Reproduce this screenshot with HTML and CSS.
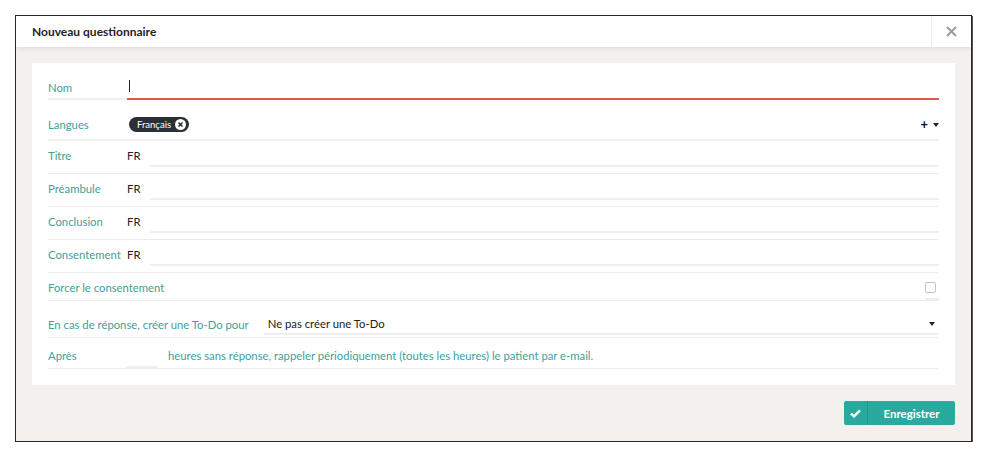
FILE: index.html
```html
<!DOCTYPE html>
<html lang="fr">
<head>
    <meta charset="UTF-8">
    <meta name="viewport" content="width=device-width, initial-scale=1.0">
    <title>Nouveau questionnaire</title>
    <link rel="stylesheet" href="styles.css">
</head>
<body>
    <div class="modal">
        <div class="modal-header">
            <h4 class="modal-title">Nouveau questionnaire</h4>
            <button class="modal-close" type="button" aria-label="Fermer">
                <svg width="11" height="11" viewBox="0 0 11 11"><path d="M1 1L10 10M10 1L1 10" stroke="#9c9c9c" stroke-width="2"/></svg>
            </button>
        </div>

        <div class="modal-body">
            <div class="form-panel">
                <div class="form-row row-nom">
                    <label class="form-label">Nom</label>
                    <div class="form-input input-focus"><span class="text-cursor"></span></div>
                </div>

                <div class="form-row row-langues">
                    <label class="form-label">Langues</label>
                    <div class="lang-tags">
                        <span class="lang-tag">Français
                            <svg class="tag-remove" width="11" height="11" viewBox="0 0 11 11"><circle cx="5.5" cy="5.5" r="5.5" fill="#fff"/><path d="M3.5 3.5L7.5 7.5M7.5 3.5L3.5 7.5" stroke="#2b3036" stroke-width="1.6"/></svg>
                        </span>
                    </div>
                    <div class="lang-add"><span class="plus">+</span><span class="caret"></span></div>
                </div>

                <div class="form-row row-i18n">
                    <label class="form-label">Titre</label>
                    <span class="lang-code">FR</span>
                    <div class="form-input"></div>
                </div>
                <div class="form-row row-i18n">
                    <label class="form-label">Préambule</label>
                    <span class="lang-code">FR</span>
                    <div class="form-input"></div>
                </div>
                <div class="form-row row-i18n">
                    <label class="form-label">Conclusion</label>
                    <span class="lang-code">FR</span>
                    <div class="form-input"></div>
                </div>
                <div class="form-row row-i18n">
                    <label class="form-label">Consentement</label>
                    <span class="lang-code">FR</span>
                    <div class="form-input"></div>
                </div>

                <div class="form-row row-check">
                    <label class="form-label label-auto">Forcer le consentement</label>
                    <div class="check-wrap"><span class="checkbox"></span></div>
                </div>

                <div class="form-row row-select">
                    <label class="form-label label-auto">En cas de réponse, créer une To-Do pour</label>
                    <div class="form-select">
                        <span>Ne pas créer une To-Do</span>
                        <span class="caret"></span>
                    </div>
                </div>

                <div class="form-row row-rappel">
                    <label class="form-label">Après</label>
                    <div class="form-input input-small"></div>
                    <span class="inline-text">heures sans réponse, rappeler périodiquement (toutes les heures) le patient par e-mail.</span>
                </div>
            </div>
        </div>

        <div class="modal-footer">
            <button class="btn-save" type="button">
                <span class="btn-icon">
                    <svg width="11" height="9" viewBox="0 0 11 9"><path d="M1 4.6L4 7.4L10 1.4" fill="none" stroke="#fff" stroke-width="2.4"/></svg>
                </span>
                <span class="btn-text">Enregistrer</span>
            </button>
        </div>
    </div>
</body>
</html>
```

FILE: styles.css
```css
body { margin: 0; background: #fff; font-family: Lato, "Liberation Sans", sans-serif; font-size: 11.3px; color: #222; }

.modal { box-sizing: border-box; width: 957px; margin: 15px 0 0 15px; border: 1px solid #2a2a2a; box-shadow: 1px 1px 0 #555; background: #f3f0ed; }

.modal-header { display: flex; align-items: stretch; height: 31px; background: #fff; box-shadow: 0 2px 4px rgba(0,0,0,0.07); position: relative; }
.modal-title { flex: 1; margin: 0; padding-left: 16px; font-size: 12px; font-weight: bold; line-height: 31px; color: #1f1f1f; }
.modal-close { width: 40px; border: none; border-left: 1px solid #ececec; background: #fff; padding: 0; display: flex; align-items: center; justify-content: center; }

.modal-body { padding: 16px; }
.form-panel { background: #fff; padding: 10px 16px 16px 16px; }

.form-row { display: flex; align-items: flex-start; border-bottom: 1px solid #ececec; }
.form-label { width: 79px; flex: none; line-height: 15px; color: #3e9f9b; }
.label-auto { width: auto; }

.row-nom { border-bottom: none; }
.row-nom .form-label { padding: 7px 0 3px; border-bottom: 2px solid #f0f0f0; }
.form-input { flex: 1; height: 17px; border-bottom: 2px solid #efefef; }
.input-focus { height: 25px; border-bottom-color: #e15a47; display: flex; align-items: center; padding-left: 2px; }
.text-cursor { width: 1px; height: 12px; background: #222; }

.row-langues { padding: 17px 0 7px; border-bottom: 2px solid #f1f1f1; align-items: center; }
.lang-tags { flex: 1; }
.lang-tag { display: inline-flex; align-items: center; gap: 4px; height: 15px; padding: 0 3px 0 8px; margin-left: 2px; border-radius: 8px; background: #2b3036; color: #fff; font-size: 9.5px; }
.lang-add { display: flex; align-items: center; gap: 5px; }
.plus { font-size: 13px; font-weight: bold; line-height: 13px; color: #111; }
.caret { width: 0; height: 0; border-left: 3px solid transparent; border-right: 3px solid transparent; border-top: 4px solid #222; }

.row-i18n { padding: 7px 0 6px; }
.lang-code { width: 23px; flex: none; line-height: 15px; color: #222; }

.row-check { padding-top: 7px; justify-content: space-between; }
.check-wrap { width: 14px; padding-top: 2px; height: 16px; border-bottom: 2px solid #efefef; }
.checkbox { display: block; width: 9px; height: 9px; border: 1px solid #c4c4c4; border-radius: 2px; }

.row-select { padding: 13px 0 2px; align-items: center; }
.form-select { flex: 1; display: flex; align-items: center; justify-content: space-between; height: 19px; margin-left: 15px; padding: 0 4px 0 4px; border-bottom: 2px solid #efefef; color: #222; }

.row-rappel { padding-top: 10px; }
.input-small { flex: none; width: 32px; height: 18px; margin-left: -1px; }
.inline-text { margin-left: 10px; line-height: 15px; color: #3e9f9b; }

.modal-footer { display: flex; justify-content: flex-end; padding: 0 16px 16px; }
.btn-save { display: flex; align-items: stretch; height: 24px; width: 111px; padding: 0; border: none; border-radius: 2px; background: #2aaa9e; color: #fff; font-family: inherit; font-weight: bold; font-size: 11.5px; }
.btn-icon { width: 23px; display: flex; align-items: center; justify-content: center; border-right: 1px solid #23988d; }
.btn-text { flex: 1; display: flex; align-items: center; justify-content: center; }
```
